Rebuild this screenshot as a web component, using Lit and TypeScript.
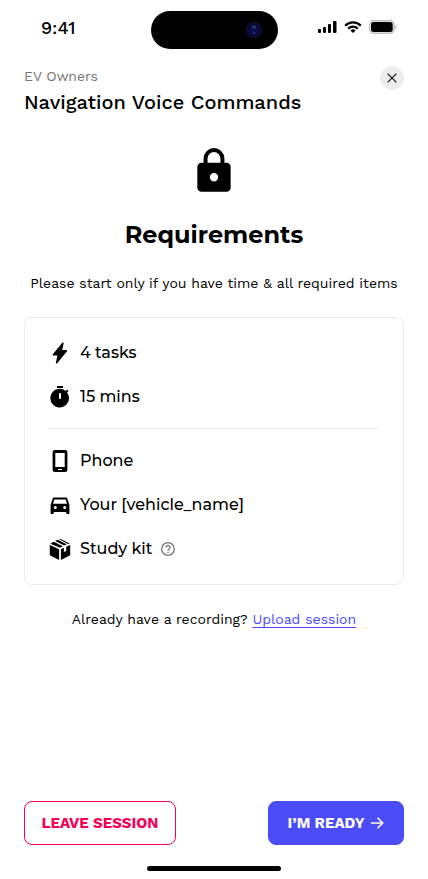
import { LitElement, html, css, svg, type TemplateResult } from "lit";
import { customElement } from "lit/decorators.js";

interface Requirement {
  label: string;
  icon: TemplateResult;
  help?: boolean;
}

const bolt = svg`<path d="M14 1.900L4.900 13.200c-.6.7-.3 1.400.6 1.400h3.900L7.900 21.400c-.2 1.100.8 1.400 1.500.6l9.400-11.500c.6-.7.3-1.400-.6-1.400h-3.900l1.300-6.500c.2-1.100-.9-1.500-1.600-.7z"/>`;

const timer = svg`
  <path d="M9 1h6v2H9z"/>
  <path fill-rule="evenodd" d="M19.030 7.390l1.420-1.420c-.43-.51-.9-.99-1.410-1.410l-1.420 1.420A8.960 8.960 0 0 0 12 3.800a9.300 9.300 0 1 0 7.030 3.590zM13 13a1 1 0 0 1-2 0V9a1 1 0 0 1 2 0z"/>`;

const phone = svg`<path fill-rule="evenodd" d="M6.600 1h10.800a2 2 0 0 1 2 2v18a2 2 0 0 1-2 2H6.600a2 2 0 0 1-2-2V3a2 2 0 0 1 2-2zM7.300 4v14h9.400V4zM10 20v1h4v-1z"/>`;

const car = svg`<path fill-rule="evenodd" d="M6.300 4.500h11.400c.8 0 1.500.5 1.700 1.200L21.400 12v7.900a1.100 1.100 0 0 1-1.100 1.100h-1a1.100 1.100 0 0 1-1.100-1.100V19H5.800v.9a1.100 1.100 0 0 1-1.100 1.100h-1a1.100 1.100 0 0 1-1.100-1.100V12l2-6.300c.2-.7.900-1.200 1.700-1.200zM7.300 16a1.500 1.500 0 1 1 0-3 1.500 1.500 0 0 1 0 3zm9.400 0a1.500 1.500 0 1 1 0-3 1.500 1.500 0 0 1 0 3zM5 10.700l1.300-4.200h11.400l1.300 4.200z"/>`;

const box = svg`
  <path d="M1.800 7.900l9.300 4.300v10.700L2.700 18.800a1.500 1.500 0 0 1-.9-1.300z"/>
  <path d="M22.200 7.900v9.600a1.500 1.500 0 0 1-.9 1.300l-8.400 4.100V12.200l3-1.400v4.300l2.300-1.200V9.700z"/>
  <path d="M2.300 6.700l3.500-1.900 9 4.400-2.800 1.500z"/>
  <path d="M7.200 4.100l2.500-1.300 8.900 4.400-2.500 1.300z"/>
  <path d="M11 2.100l.4-.2a1.500 1.500 0 0 1 1.300 0l9 4.600-1.800.5z"/>`;

const effort: Requirement[] = [
  { label: "4 tasks", icon: bolt },
  { label: "15 mins", icon: timer },
];

const equipment: Requirement[] = [
  { label: "Phone", icon: phone },
  { label: "Your [vehicle_name]", icon: car },
  { label: "Study kit", icon: box, help: true },
];

@customElement("status-bar")
export class StatusBar extends LitElement {
  static styles = css`
    :host {
      display: grid;
      grid-template-columns: 1fr auto 1fr;
      align-items: center;
      padding: 11px 24px 0;
    }
    .time {
      justify-self: start;
      padding: 0 0 4px 17px;
      font: 500 18px/24px "Work Sans", Inter, sans-serif;
    }
    .island {
      display: flex;
      align-items: center;
      justify-content: flex-end;
      box-sizing: border-box;
      width: 127px;
      height: 38px;
      padding-right: 16px;
      border-radius: 19px;
      background: #000;
    }
    .signals {
      display: flex;
      justify-self: end;
      align-items: center;
      gap: 7px;
      padding: 0 7px 6px 0;
    }
    svg {
      display: block;
    }
  `;

  render() {
    return html`
      <span class="time">9:41</span>
      <span class="island">
        <svg width="16" height="16" viewBox="0 0 16 16" aria-hidden="true">
          <circle cx="8" cy="8" r="7.500" fill="#080933" stroke="#15163f" />
          <circle cx="8" cy="8" r="4.500" fill="#0c0d4a" />
          <circle cx="8" cy="5" r="1.800" fill="#343a75" />
          <circle cx="8" cy="11" r="1.600" fill="#22265f" />
        </svg>
      </span>
      <span class="signals">
        <svg width="19" height="12" viewBox="0 0 19 12" aria-hidden="true">
          <rect x="0" y="8" width="3" height="4" rx="1" />
          <rect x="5" y="6" width="3" height="6" rx="1" />
          <rect x="10" y="3" width="3" height="9" rx="1" />
          <rect x="15" y="0" width="3.500" height="12" rx="1" />
        </svg>
        <svg width="18" height="12" viewBox="0 0 18 12" aria-hidden="true">
          <g fill="none" stroke="#000" stroke-width="2.200">
            <path d="M1.200 4.700a11 11 0 0 1 15.600 0" />
            <path d="M4.200 7.700a6.800 6.800 0 0 1 9.600 0" />
          </g>
          <path d="M9 12L6.400 9.500a3.700 3.700 0 0 1 5.200 0z" />
        </svg>
        <svg width="28" height="14" viewBox="0 0 28 14" aria-hidden="true">
          <rect x=".7" y=".7" width="24.300" height="12.600" rx="4" fill="#fff" stroke="#bdbdbd" stroke-width="1.400" />
          <rect x="2" y="2" width="21.700" height="10" rx="2.500" />
          <path d="M26.400 5v4c1.400-.6 1.400-3.400 0-4z" fill="#a8a8a8" />
        </svg>
      </span>
    `;
  }
}

@customElement("app-root")
export class AppRoot extends LitElement {
  static styles = css`
    :host {
      display: flex;
      flex-direction: column;
      box-sizing: border-box;
      min-height: 100vh;
      background: #fff;
      color: #000;
      font: 400 14px/20px "Work Sans", Inter, sans-serif;
    }
    svg {
      display: block;
      flex: none;
    }
    h1,
    h2,
    p,
    ul {
      margin: 0;
      padding: 0;
    }
    button {
      margin: 0;
      font: inherit;
      cursor: pointer;
    }
    .header {
      display: flex;
      justify-content: space-between;
      align-items: flex-start;
      padding: 17px 24px 0;
    }
    .group {
      color: #757575;
    }
    .title {
      margin-top: 4px;
      font-size: 20px;
      line-height: 24px;
      font-weight: 500;
    }
    .close {
      display: grid;
      place-items: center;
      width: 24px;
      height: 24px;
      padding: 0;
      border: 0;
      border-radius: 50%;
      background: #ededed;
    }
    .main {
      display: flex;
      flex-direction: column;
      align-items: center;
      flex: 1;
      padding: 32px 24px;
    }
    .heading {
      margin-top: 23px;
      font: 700 24px/32px Montserrat, Inter, sans-serif;
    }
    .intro {
      margin-top: 22px;
      text-align: center;
    }
    .card {
      box-sizing: border-box;
      width: 100%;
      margin-top: 24px;
      padding: 23px;
      border: 1px solid #ebebeb;
      border-radius: 8px;
    }
    .list {
      display: flex;
      flex-direction: column;
      gap: 20px;
      list-style: none;
      font: 500 16px/24px Montserrat, Inter, sans-serif;
    }
    .list + .list {
      margin-top: 19px;
      padding-top: 20px;
      border-top: 1px solid #ebebeb;
    }
    .item {
      display: flex;
      align-items: center;
      gap: 8px;
    }
    .help {
      padding: 0;
      border: 0;
      background: none;
      color: #757575;
    }
    .recording {
      margin-top: 24px;
      text-align: center;
    }
    .link {
      color: #4b4bf8;
      text-underline-offset: 3px;
    }
    .actions {
      display: flex;
      justify-content: space-between;
      padding: 0 24px;
    }
    .action {
      display: flex;
      align-items: center;
      justify-content: center;
      gap: 4px;
      box-sizing: border-box;
      height: 44px;
      padding: 0 16px;
      border: 1px solid;
      border-radius: 8px;
      font-size: 15px;
      font-weight: 700;
    }
    .leave {
      min-width: 152px;
      border-color: #f50057;
      background: #fff;
      color: #f50057;
    }
    .ready {
      min-width: 136px;
      border-color: #4b4bf8;
      background: #4b4bf8;
      color: #fff;
    }
    .home {
      align-self: center;
      width: 134px;
      height: 5px;
      margin: 21px 0 8px;
      border-radius: 3px;
      background: #000;
    }
  `;

  private renderItem({ label, icon, help }: Requirement) {
    return html`
      <li class="item">
        <svg width="24" height="24" viewBox="0 0 24 24" aria-hidden="true">${icon}</svg>
        <span>${label}</span>
        ${help
          ? html`<button class="help" aria-label="About the study kit">
              <svg width="16" height="16" viewBox="0 0 16 16" fill="none" stroke="currentColor" stroke-width="1.300">
                <circle cx="8" cy="8" r="6.300" />
                <path d="M6 6.500a2 2 0 1 1 3.200 1.600C8.400 8.700 8 9 8 9.700" />
                <path d="M8 10.700v1.300" />
              </svg>
            </button>`
          : null}
      </li>
    `;
  }

  render() {
    return html`
      <status-bar></status-bar>
      <header class="header">
        <div>
          <p class="group">EV Owners</p>
          <h1 class="title">Navigation Voice Commands</h1>
        </div>
        <button class="close" aria-label="Close">
          <svg width="10" height="10" viewBox="0 0 10 10" fill="none" stroke="#1c1c1c" stroke-width="1.300">
            <path d="M.6.6l8.800 8.800M9.400.6L.6 9.400" />
          </svg>
        </button>
      </header>
      <main class="main">
        <svg width="50" height="50" viewBox="0 0 24 24" aria-hidden="true">
          <path fill-rule="evenodd" d="M18 8h-1V6A5 5 0 0 0 7 6v2H6a2 2 0 0 0-2 2v10a2 2 0 0 0 2 2h12a2 2 0 0 0 2-2V10a2 2 0 0 0-2-2zm-6 9a2 2 0 1 1 0-4 2 2 0 0 1 0 4zM8.900 8V6a3.100 3.100 0 0 1 6.200 0v2z" />
        </svg>
        <h2 class="heading">Requirements</h2>
        <p class="intro">Please start only if you have time &amp; all required items</p>
        <section class="card" aria-label="Requirements">
          <ul class="list">${effort.map((item) => this.renderItem(item))}</ul>
          <ul class="list">${equipment.map((item) => this.renderItem(item))}</ul>
        </section>
        <p class="recording">Already have a recording? <a class="link" href="#upload">Upload session</a></p>
      </main>
      <footer class="actions">
        <button class="action leave">LEAVE SESSION</button>
        <button class="action ready">
          I’M READY
          <svg width="16" height="16" viewBox="0 0 16 16" fill="none" stroke="currentColor" stroke-width="1.600" aria-hidden="true">
            <path d="M2 8h11.500M8.500 2.800L13.700 8l-5.200 5.200" />
          </svg>
        </button>
      </footer>
      <div class="home"></div>
    `;
  }
}
